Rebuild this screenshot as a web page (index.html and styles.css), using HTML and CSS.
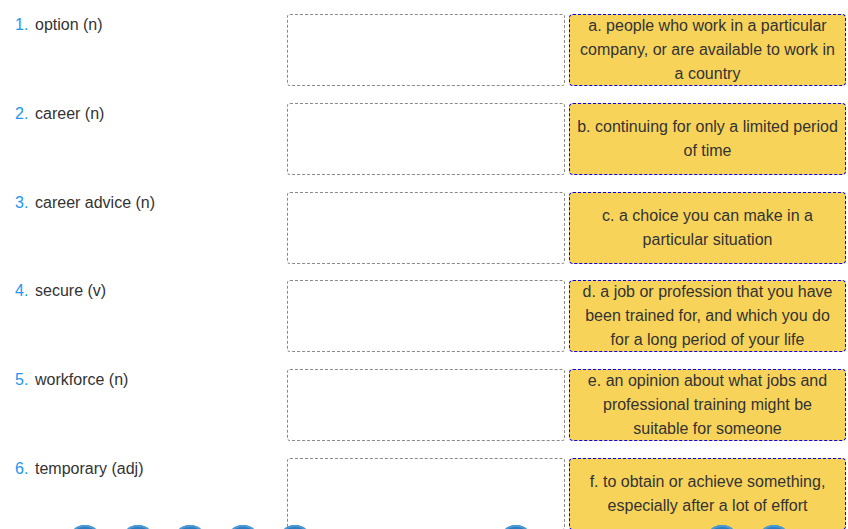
FILE: index.html
```html
<!DOCTYPE html>
<html lang="en">
<head>
    <meta charset="UTF-8">
    <meta name="viewport" content="width=device-width, initial-scale=1.0">
    <title>Vocabulary matching</title>
    <link rel="stylesheet" href="styles.css">
</head>
<body>
    <div class="matching">
        <div class="row">
            <div class="term"><span class="num">1.</span>option (n)</div>
            <div class="drop"></div>
            <div class="card">a. people who work in a particular company, or are available to work in a country</div>
        </div>
        <div class="row">
            <div class="term"><span class="num">2.</span>career (n)</div>
            <div class="drop"></div>
            <div class="card">b. continuing for only a limited period of time</div>
        </div>
        <div class="row">
            <div class="term"><span class="num">3.</span>career advice (n)</div>
            <div class="drop"></div>
            <div class="card">c. a choice you can make in a particular situation</div>
        </div>
        <div class="row">
            <div class="term"><span class="num">4.</span>secure (v)</div>
            <div class="drop"></div>
            <div class="card">d. a job or profession that you have been trained for, and which you do for a long period of your life</div>
        </div>
        <div class="row">
            <div class="term"><span class="num">5.</span>workforce (n)</div>
            <div class="drop"></div>
            <div class="card">e. an opinion about what jobs and professional training might be suitable for someone</div>
        </div>
        <div class="row">
            <div class="term"><span class="num">6.</span>temporary (adj)</div>
            <div class="drop"></div>
            <div class="card">f. to obtain or achieve something, especially after a lot of effort</div>
        </div>
    </div>

    <!-- floating tool buttons, only their tops show -->
    <div class="toolbar">
        <span class="btn"></span>
        <span class="btn"></span>
        <span class="btn"></span>
        <span class="btn"></span>
        <span class="btn"></span>
        <span class="btn btn-mid"></span>
        <span class="btn btn-right"></span>
        <span class="btn"></span>
    </div>
</body>
</html>
```

FILE: styles.css
```css
body {
    margin: 0;
    font-family: "Liberation Sans", Arial, sans-serif;
    font-size: 16px;
    color: #333;
    background: #fff;
}

.matching {
    padding: 14px 0 0 15px;
    display: flex;
    flex-direction: column;
    gap: 16.8px;
}

.row {
    display: flex;
    height: 72px;
}

.term {
    width: 272px;
    flex-shrink: 0;
    padding-top: 2px;
}

.num {
    display: inline-block;
    width: 20px;
    color: #2196f3;
}

.drop {
    width: 278px;
    flex-shrink: 0;
    box-sizing: border-box;
    border: 1px dashed #8a8a8a;
    border-radius: 3px;
}

.card {
    width: 277px;
    flex-shrink: 0;
    margin-left: 4px;
    box-sizing: border-box;
    padding: 0 5px;
    display: flex;
    align-items: center;
    justify-content: center;
    text-align: center;
    line-height: 24px;
    background-color: #f8d35a;
    border: 1px dashed #0000ff;
    border-radius: 4px;
}

.toolbar {
    position: fixed;
    left: 68px;
    top: 525px;
    display: flex;
    gap: 18.5px;
}

.btn {
    width: 34px;
    height: 34px;
    border-radius: 50%;
    background: #2c7dc0;
    box-shadow: inset 0 2px 0 #4a9ad8;
}

.btn-mid {
    margin-left: 168.5px;
}

.btn-right {
    margin-left: 153px;
}
```
